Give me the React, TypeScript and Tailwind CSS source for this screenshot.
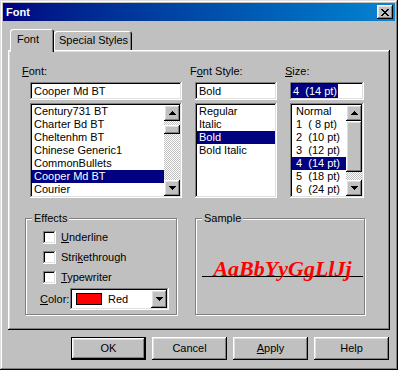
import React from "react";

const raised =
  "shadow-[inset_-1px_-1px_#000000,inset_1px_1px_#ffffff,inset_-2px_-2px_#808080,inset_2px_2px_#dfdfdf]";
const sunken =
  "shadow-[inset_-1px_-1px_#ffffff,inset_1px_1px_#808080,inset_-2px_-2px_#dfdfdf,inset_2px_2px_#000000]";
const checker =
  "bg-[image:repeating-conic-gradient(#c0c0c0_0%_25%,#ffffff_0%_50%)] bg-[length:2px_2px]";

const Arrow = ({ down }: { down?: boolean }) => (
  <svg width="7" height="4" viewBox="0 0 7 4" shapeRendering="crispEdges">
    <path
      fill="#000"
      d={
        down
          ? "M0 0h7v1H0zM1 1h5v1H1zM2 2h3v1H2zM3 3h1v1H3z"
          : "M3 0h1v1H3zM2 1h3v1H2zM1 2h5v1H1zM0 3h7v1H0z"
      }
    />
  </svg>
);

const ArrowButton = ({ down }: { down?: boolean }) => (
  <div className={`flex h-[16px] w-[16px] shrink-0 items-center justify-center bg-[#c0c0c0] ${raised}`}>
    <Arrow down={down} />
  </div>
);

const ScrollBar = ({ gap, thumb }: { gap: string; thumb: string }) => (
  <div className="flex w-[16px] flex-col">
    <ArrowButton />
    <div className={`flex flex-1 flex-col ${checker}`}>
      <div className={gap} />
      <div className={`bg-[#c0c0c0] ${raised} ${thumb}`} />
    </div>
    <ArrowButton down />
  </div>
);

interface ListProps {
  items: string[];
  selected: string;
  pad: string;
  scroll?: { gap: string; thumb: string };
}

const ListBox = ({ items, selected, pad, scroll }: ListProps) => (
  <div className={`mt-[3px] flex h-[95px] bg-white p-[2px] ${sunken}`}>
    <div className="flex-1 overflow-hidden">
      {items.map((item) => (
        <div
          key={item}
          className={`h-[13px] whitespace-pre leading-[13px] ${pad} ${
            item === selected ? "bg-[#000080] text-white" : ""
          }`}
        >
          {item}
        </div>
      ))}
    </div>
    {scroll && <ScrollBar gap={scroll.gap} thumb={scroll.thumb} />}
  </div>
);

const Field = ({ children }: { children: React.ReactNode }) => (
  <div className={`mt-[4px] flex h-[18px] items-center bg-white px-[2px] ${sunken}`}>{children}</div>
);

const GroupBox = ({
  title,
  width,
  children,
}: {
  title: string;
  width: string;
  children: React.ReactNode;
}) => (
  <div
    className={`flex h-[97px] flex-col border border-[#808080] shadow-[inset_1px_1px_#ffffff,1px_1px_#ffffff] ${width}`}
  >
    <span className="-mt-[7px] ml-[6px] self-start bg-[#c0c0c0] px-[2px] leading-[13px]">{title}</span>
    {children}
  </div>
);

const CheckRow = ({ pre, key1, post }: { pre: string; key1: string; post: string }) => (
  <div className="flex h-[13px] items-center">
    <div className={`h-[13px] w-[13px] bg-white ${sunken}`} />
    <span className="ml-[5px]">
      {pre}
      <span className="underline">{key1}</span>
      {post}
    </span>
  </div>
);

const Button = ({ children, isDefault }: { children: React.ReactNode; isDefault?: boolean }) => (
  <div
    className={`flex h-[23px] w-[75px] items-center justify-center bg-[#c0c0c0] ${
      isDefault ? "border border-black" : ""
    } ${raised}`}
  >
    {children}
  </div>
);

const fonts = [
  "Century731 BT",
  "Charter Bd BT",
  "Cheltenhm BT",
  "Chinese Generic1",
  "CommonBullets",
  "Cooper Md BT",
  "Courier",
];
const styles = ["Regular", "Italic", "Bold", "Bold Italic"];
const sizes = [
  "Normal",
  "1  ( 8 pt)",
  "2  (10 pt)",
  "3  (12 pt)",
  "4  (14 pt)",
  "5  (18 pt)",
  "6  (24 pt)",
];

const App = () => {
  return (
    <div
      className={`flex h-[370px] w-[398px] flex-col bg-[#c0c0c0] p-[3px] font-['Liberation_Sans',Arial,sans-serif] text-[11px] leading-[13px] text-black shadow-[inset_-1px_-1px_#000000,inset_1px_1px_#dfdfdf,inset_-2px_-2px_#808080,inset_2px_2px_#ffffff]`}
    >
      {/* title bar */}
      <div className="flex h-[18px] items-center justify-between bg-linear-to-r from-[#000080] to-[#1084d0] pl-[3px] pr-[2px]">
        <span className="font-bold text-white">Font</span>
        <div className={`flex h-[14px] w-[16px] items-center justify-center bg-[#c0c0c0] ${raised}`}>
          <svg width="8" height="7" viewBox="0 0 8 7" shapeRendering="crispEdges">
            <path
              fill="#000"
              d="M0 0h2v1H0zM6 0h2v1H6zM1 1h2v1H1zM5 1h2v1H5zM2 2h4v1H2zM3 3h2v1H3zM2 4h4v1H2zM1 5h2v1H1zM5 5h2v1H5zM0 6h2v1H0zM6 6h2v1H6z"
            />
          </svg>
        </div>
      </div>

      {/* tabs */}
      <div className="relative z-10 mt-[8px] -mb-[2px] flex h-[23px] pl-[7px]">
        <div className="h-[23px] w-[44px] rounded-t-[3px] bg-[#c0c0c0] pl-[7px] pt-[4px] shadow-[inset_1px_1px_#ffffff,inset_-1px_0_#000000,inset_-2px_0_#808080]">
          Font
        </div>
        <div className="mt-[2px] h-[19px] w-[78px] rounded-t-[3px] bg-[#c0c0c0] pl-[5px] pt-[3px] shadow-[inset_1px_1px_#ffffff,inset_-1px_0_#000000,inset_-2px_0_#808080]">
          Special Styles
        </div>
      </div>

      {/* tab panel */}
      <div className={`mx-[5px] h-[280px] pt-[15px] ${raised}`}>
        <div className="ml-[22px] flex gap-[13px]">
          <div className="flex w-[152px] flex-col">
            <div className="-ml-[8px] h-[13px]">
              <span className="underline">F</span>ont:
            </div>
            <Field>
              <span className="pl-[2px]">Cooper Md BT</span>
            </Field>
            <ListBox
              items={fonts}
              selected="Cooper Md BT"
              pad="pl-[2px]"
              scroll={{ gap: "h-[4px]", thumb: "h-[9px]" }}
            />
          </div>
          <div className="flex w-[82px] flex-col">
            <div className="-ml-[5px] h-[13px]">
              F<span className="underline">o</span>nt Style:
            </div>
            <Field>
              <span className="pl-[2px]">Bold</span>
            </Field>
            <ListBox items={styles} selected="Bold" pad="pl-[2px]" />
          </div>
          <div className="flex w-[74px] flex-col">
            <div className="-ml-[5px] h-[13px]">
              <span className="underline">S</span>ize:
            </div>
            <Field>
              <span className="h-[14px] whitespace-pre bg-[#000080] px-[1px] leading-[14px] text-white">
                4  (14 pt)
              </span>
            </Field>
            <ListBox
              items={sizes}
              selected="4  (14 pt)"
              pad="pl-[4px]"
              scroll={{ gap: "h-0", thumb: "h-[51px]" }}
            />
          </div>
        </div>

        <div className="ml-[17px] mt-[20px] flex gap-[18px]">
          <GroupBox title="Effects" width="w-[152px]">
            <div className="mt-[6px] flex flex-col gap-[7px] pl-[17px]">
              <CheckRow pre="" key1="U" post="nderline" />
              <CheckRow pre="Stri" key1="k" post="ethrough" />
              <CheckRow pre="" key1="T" post="ypewriter" />
            </div>
            <div className="mt-[4px] flex items-center pl-[14px]">
              <span className="w-[30px]">
                <span className="underline">C</span>olor:
              </span>
              <div className={`flex h-[22px] w-[99px] items-center bg-white p-[2px] ${sunken}`}>
                <div className="ml-[4px] h-[12px] w-[26px] border border-black bg-[#ff0000]" />
                <span className="ml-[6px] flex-1">Red</span>
                <div className={`flex h-[18px] w-[16px] items-center justify-center bg-[#c0c0c0] ${raised}`}>
                  <Arrow down />
                </div>
              </div>
            </div>
          </GroupBox>
          <GroupBox title="Sample" width="w-[170px]">
            <div className="ml-[6px] mt-[29px] h-[30px] w-[161px] bg-[image:linear-gradient(#000000,#000000)] bg-[length:100%_1px] bg-[position:0_22px] bg-no-repeat text-center font-['Liberation_Serif',serif] text-[22px] font-bold italic leading-[30px] text-[#ff0000]">
              AaBbYyGgLlJj
            </div>
          </GroupBox>
        </div>
      </div>

      {/* buttons */}
      <div className="mt-[7px] flex justify-end gap-[6px] pr-[6px]">
        <Button isDefault>OK</Button>
        <Button>Cancel</Button>
        <Button>
          <span>
            <span className="underline">A</span>pply
          </span>
        </Button>
        <Button>Help</Button>
      </div>
    </div>
  );
};

export default App;
